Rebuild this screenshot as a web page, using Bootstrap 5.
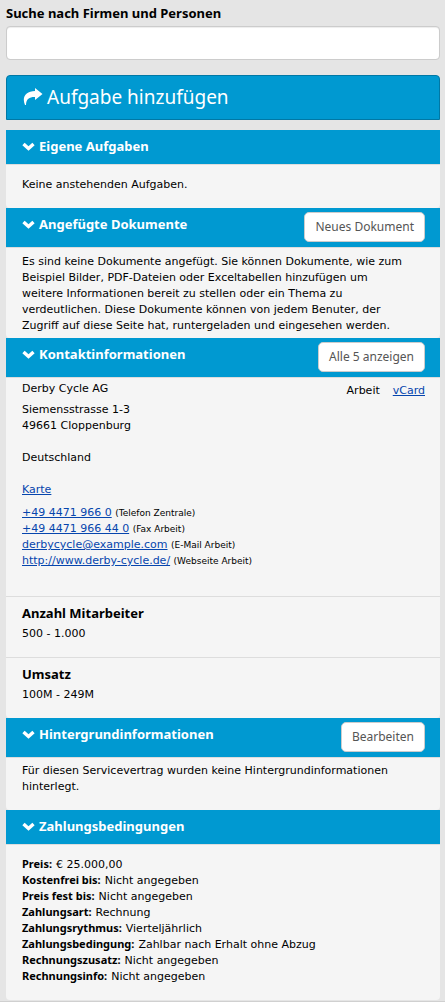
<!DOCTYPE html>
<html lang="de">
<head>
<meta charset="utf-8">
<meta name="viewport" content="width=device-width, initial-scale=1">
<title>Servicevertrag</title>
<link href="https://cdn.jsdelivr.net/npm/bootstrap@5.3.0/dist/css/bootstrap.min.css" rel="stylesheet">
<style>
body { background: #e5e5e5; color: #000; font-family: "DejaVu Sans", sans-serif; font-size: 11px; line-height: 16px; }
.sidebar { padding: 4px 5px 0 6px; }
.search-label { font: bold 13px/18px "Noto Sans", sans-serif; }
.search-box { height: 34px; border-color: #ccc; border-radius: 4px; box-shadow: inset 0 1px 1px rgba(0,0,0,.075); }
.add-task { background: #0099d1; border: 1px solid #0078a5; border-radius: 4px 4px 0 0; color: #fff; margin: 15px 0 10px; padding: 6px 16px 7px; font: 19px/30px "Noto Sans", sans-serif; }
.add-task:hover { background: #008abd; }
.panel-head { background: #0099d1; border-bottom: 1px solid #ddd; padding: 0 15px 0 16px; min-height: 35px; }
.panel-head.with-action { min-height: 40px; }
.panel-toggle { color: #fff; font: bold 13px/18px "Noto Sans", sans-serif; padding: 7px 0 8px; }
.panel-head h2 { font-size: 13px; line-height: 18px; }
.panel-body { background: #f5f5f5; border-radius: 0 0 4px 4px; padding: 0 15px 0 16px; }
.panel-body a { color: #0645ad; }
.roomy { padding-top: 12px; padding-bottom: 15px; }
.snug { padding-top: 6px; padding-bottom: 4px; }
.backdrop-info { padding-top: 5px; padding-bottom: 15px; }
.text-block { max-width: 384px; }
.action { background: #fff; border: 1px solid #ccc; border-radius: 5px; color: #555; font: 12px/18px "Noto Sans", sans-serif; padding: 5px 10px; margin-top: 4px; }
.contact { padding: 3px 0 27px; }
.contact address { margin: 5px 0 7px; line-height: 16px; }
.contact-tools { padding-top: 2px; gap: 13px; }
.entry { border-top: 1px solid #ddd; margin: 0 -15px 0 -16px; padding: 7px 15px 15px 16px; }
.entry h3 { font: bold 13px/18px "Noto Sans", sans-serif; margin-bottom: 4px; }
.note { font-size: 9px; }
.terms dt { font-family: "Noto Sans", sans-serif; line-height: 14px; }
.page-end { border-top: 1px solid #d0d0d0; margin-top: 1px; }
</style>
</head>
<body>
<svg class="d-none" aria-hidden="true">
  <symbol id="chevron" viewBox="0 0 13 9"><path d="M1.500 2l5 4.500 5-4.500" fill="none" stroke="#fff" stroke-width="3.400"/></symbol>
</svg>
<main class="sidebar">
  <label class="search-label d-block" for="search">Suche nach Firmen und Personen</label>
  <input class="form-control search-box mt-1" id="search" type="text">
  <button class="add-task w-100 d-flex align-items-center gap-1" type="button">
    <svg width="20" height="18" viewBox="0 0 20 18" fill="#fff" aria-hidden="true"><path d="M12 0L19.500 6 12 12V9C7 8.800 3 10.500 3 17H2C-1.500 9 3 3 12 3z"/></svg>
    <span>Aufgabe hinzufügen</span>
  </button>

  <section>
    <header class="panel-head">
      <h2 class="m-0"><button class="panel-toggle border-0 bg-transparent d-flex align-items-center gap-1" type="button"><svg width="13" height="9" aria-hidden="true"><use href="#chevron"/></svg>Eigene Aufgaben</button></h2>
    </header>
    <div class="panel-body roomy">Keine anstehenden Aufgaben.</div>
  </section>

  <section>
    <header class="panel-head with-action d-flex justify-content-between align-items-start">
      <h2 class="m-0"><button class="panel-toggle border-0 bg-transparent d-flex align-items-center gap-1" type="button"><svg width="13" height="9" aria-hidden="true"><use href="#chevron"/></svg>Angefügte Dokumente</button></h2>
      <button class="action" type="button">Neues Dokument</button>
    </header>
    <div class="panel-body snug"><p class="text-block m-0">Es sind keine Dokumente angefügt. Sie können Dokumente, wie zum Beispiel Bilder, PDF-Dateien oder Exceltabellen hinzufügen um weitere Informationen bereit zu stellen oder ein Thema zu verdeutlichen. Diese Dokumente können von jedem Benuter, der Zugriff auf diese Seite hat, runtergeladen und eingesehen werden.</p></div>
  </section>

  <section>
    <header class="panel-head with-action d-flex justify-content-between align-items-start">
      <h2 class="m-0"><button class="panel-toggle border-0 bg-transparent d-flex align-items-center gap-1" type="button"><svg width="13" height="9" aria-hidden="true"><use href="#chevron"/></svg>Kontaktinformationen</button></h2>
      <button class="action" type="button">Alle 5 anzeigen</button>
    </header>
    <div class="panel-body">
      <div class="contact d-flex justify-content-between">
        <div>
          <div>Derby Cycle AG</div>
          <address>Siemensstrasse 1-3<br>49661 Cloppenburg<br><br>Deutschland<br><br><a href="#karte">Karte</a></address>
          <ul class="list-unstyled m-0">
            <li><a href="tel:+4944719660">+49 4471 966 0</a> <span class="note">(Telefon Zentrale)</span></li>
            <li><a href="tel:+49447196644">+49 4471 966 44 0</a> <span class="note">(Fax Arbeit)</span></li>
            <li><a href="mailto:derbycycle@example.com">derbycycle@example.com</a> <span class="note">(E-Mail Arbeit)</span></li>
            <li><a href="http://www.derby-cycle.de/">http://www.derby-cycle.de/</a> <span class="note">(Webseite Arbeit)</span></li>
          </ul>
        </div>
        <div class="contact-tools d-flex align-items-start"><span>Arbeit</span><a href="#vcard">vCard</a></div>
      </div>
      <div class="entry"><h3>Anzahl Mitarbeiter</h3>500 - 1.000</div>
      <div class="entry"><h3>Umsatz</h3>100M - 249M</div>
    </div>
  </section>

  <section>
    <header class="panel-head with-action d-flex justify-content-between align-items-start">
      <h2 class="m-0"><button class="panel-toggle border-0 bg-transparent d-flex align-items-center gap-1" type="button"><svg width="13" height="9" aria-hidden="true"><use href="#chevron"/></svg>Hintergrundinformationen</button></h2>
      <button class="action" type="button">Bearbeiten</button>
    </header>
    <div class="panel-body backdrop-info"><p class="text-block m-0">Für diesen Servicevertrag wurden keine Hintergrundinformationen hinterlegt.</p></div>
  </section>

  <section>
    <header class="panel-head">
      <h2 class="m-0"><button class="panel-toggle border-0 bg-transparent d-flex align-items-center gap-1" type="button"><svg width="13" height="9" aria-hidden="true"><use href="#chevron"/></svg>Zahlungsbedingungen</button></h2>
    </header>
    <div class="panel-body roomy">
      <dl class="terms m-0">
        <div class="d-flex align-items-baseline gap-1"><dt>Preis:</dt><dd class="m-0">€ 25.000,00</dd></div>
        <div class="d-flex align-items-baseline gap-1"><dt>Kostenfrei bis:</dt><dd class="m-0">Nicht angegeben</dd></div>
        <div class="d-flex align-items-baseline gap-1"><dt>Preis fest bis:</dt><dd class="m-0">Nicht angegeben</dd></div>
        <div class="d-flex align-items-baseline gap-1"><dt>Zahlungsart:</dt><dd class="m-0">Rechnung</dd></div>
        <div class="d-flex align-items-baseline gap-1"><dt>Zahlungsrythmus:</dt><dd class="m-0">Vierteljährlich</dd></div>
        <div class="d-flex align-items-baseline gap-1"><dt>Zahlungsbedingung:</dt><dd class="m-0">Zahlbar nach Erhalt ohne Abzug</dd></div>
        <div class="d-flex align-items-baseline gap-1"><dt>Rechnungszusatz:</dt><dd class="m-0">Nicht angegeben</dd></div>
        <div class="d-flex align-items-baseline gap-1"><dt>Rechnungsinfo:</dt><dd class="m-0">Nicht angegeben</dd></div>
      </dl>
    </div>
  </section>
</main>
<div class="page-end"></div>
<script src="https://cdn.jsdelivr.net/npm/bootstrap@5.3.0/dist/js/bootstrap.bundle.min.js"></script>
</body>
</html>
